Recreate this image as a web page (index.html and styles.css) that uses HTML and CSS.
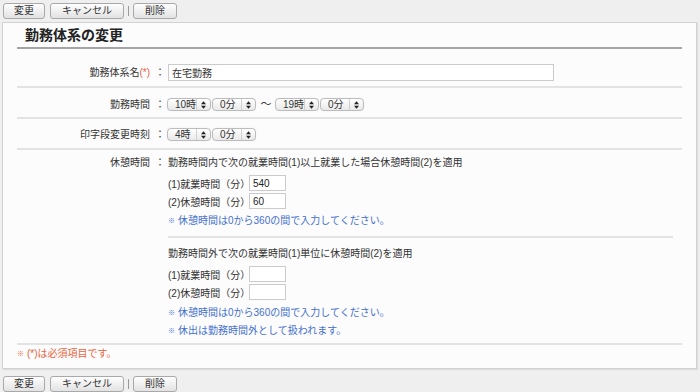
FILE: index.html
```html
<!DOCTYPE html>
<html lang="ja">
<head>
<meta charset="utf-8">
<title>勤務体系の変更</title>
<link rel="stylesheet" href="styles.css">
</head>
<body>
<div class="toolbar">
  <button class="btn btn-s first">変更</button>
  <button class="btn btn-l">キャンセル</button>
  <span class="bar"></span>
  <button class="btn btn-m">削除</button>
</div>

<div class="panel">
  <h1 class="title">勤務体系の変更</h1>

  <div class="row row-name">
    <div class="label">勤務体系名<span class="req">(*)</span></div>
    <div class="colon">：</div>
    <div class="value"><input class="text-input" type="text" value="在宅勤務"></div>
  </div>

  <div class="row row-time">
    <div class="label">勤務時間</div>
    <div class="colon">：</div>
    <div class="value selects">
      <span class="sel"><span class="sel-text">10時</span><span class="sel-arrow"><svg width="5" height="8" viewBox="0 0 5 8"><path d="M0 3.3L2.5 0.2 5 3.3z M0 4.7L2.5 7.8 5 4.7z" fill="#222"/></svg></span></span>
      <span class="sel"><span class="sel-text">0分</span><span class="sel-arrow"><svg width="5" height="8" viewBox="0 0 5 8"><path d="M0 3.3L2.5 0.2 5 3.3z M0 4.7L2.5 7.8 5 4.7z" fill="#222"/></svg></span></span>
      <span class="tilde">〜</span>
      <span class="sel"><span class="sel-text">19時</span><span class="sel-arrow"><svg width="5" height="8" viewBox="0 0 5 8"><path d="M0 3.3L2.5 0.2 5 3.3z M0 4.7L2.5 7.8 5 4.7z" fill="#222"/></svg></span></span>
      <span class="sel"><span class="sel-text">0分</span><span class="sel-arrow"><svg width="5" height="8" viewBox="0 0 5 8"><path d="M0 3.3L2.5 0.2 5 3.3z M0 4.7L2.5 7.8 5 4.7z" fill="#222"/></svg></span></span>
    </div>
  </div>

  <div class="row row-stamp">
    <div class="label">印字段変更時刻</div>
    <div class="colon">：</div>
    <div class="value selects">
      <span class="sel"><span class="sel-text">4時</span><span class="sel-arrow"><svg width="5" height="8" viewBox="0 0 5 8"><path d="M0 3.3L2.5 0.2 5 3.3z M0 4.7L2.5 7.8 5 4.7z" fill="#222"/></svg></span></span>
      <span class="sel"><span class="sel-text">0分</span><span class="sel-arrow"><svg width="5" height="8" viewBox="0 0 5 8"><path d="M0 3.3L2.5 0.2 5 3.3z M0 4.7L2.5 7.8 5 4.7z" fill="#222"/></svg></span></span>
    </div>
  </div>

  <div class="row row-break">
    <div class="label">休憩時間</div>
    <div class="colon">：</div>
    <div class="value">
      <div class="section">
        <div class="line">勤務時間内で次の就業時間(1)以上就業した場合休憩時間(2)を適用</div>
        <div class="field"><span class="flabel">(1)就業時間（分）</span><input class="num" type="text" value="540"></div>
        <div class="field"><span class="flabel">(2)休憩時間（分）</span><input class="num" type="text" value="60"></div>
        <div class="note"><span class="mark">※</span>休憩時間は0から360の間で入力してください。</div>
      </div>
      <div class="section second">
        <div class="line">勤務時間外で次の就業時間(1)単位に休憩時間(2)を適用</div>
        <div class="field"><span class="flabel">(1)就業時間（分）</span><input class="num" type="text" value=""></div>
        <div class="field"><span class="flabel">(2)休憩時間（分）</span><input class="num" type="text" value=""></div>
        <div class="note first-note"><span class="mark">※</span>休憩時間は0から360の間で入力してください。</div>
        <div class="note tight"><span class="mark">※</span>休出は勤務時間外として扱われます。</div>
      </div>
    </div>
  </div>

  <div class="footnote"><span class="mark">※</span>(*)は必須項目です。</div>
</div>

<div class="toolbar bottom">
  <button class="btn btn-s first">変更</button>
  <button class="btn btn-l">キャンセル</button>
  <span class="bar"></span>
  <button class="btn btn-m">削除</button>
</div>
</body>
</html>
```

FILE: styles.css
```css
html, body {
  margin: 0;
  padding: 0;
}
body {
  background: #efefef;
  color: #333;
  font-family: "Liberation Sans", "Noto Sans CJK JP", sans-serif;
  font-size: 10px;
  width: 700px;
  height: 392px;
  overflow: hidden;
}

/* toolbar */
.toolbar {
  display: flex;
  align-items: center;
  gap: 4px;
  padding: 3px 0 0 3px;
  height: 16px;
}
.toolbar.bottom {
  padding-top: 7px;
}
.btn {
  box-sizing: border-box;
  height: 16px;
  padding: 0;
  margin: 0;
  border: 1px solid #a9a9a9;
  border-radius: 3px;
  background: linear-gradient(#fefefe, #e2e2e2);
  font-family: "Liberation Sans", "Noto Sans CJK JP", sans-serif;
  font-size: 10px;
  line-height: 14px;
  color: #333;
  text-align: center;
}
.btn.first { margin-right: 1px; }
.btn-s { width: 42px; }
.btn-l { width: 74px; }
.btn-m { width: 44px; }
.bar {
  width: 1px;
  height: 10px;
  background: #9a9a9a;
}

/* panel */
.panel {
  margin: 3px 3px 0 2px;
  background: #fcfcfc;
  border: 1px solid #d2d2d2;
  box-shadow: 1px 1px 1px rgba(0, 0, 0, 0.08);
}
.title {
  margin: 0 14px;
  padding: 1px 0 0 8px;
  font-size: 14px;
  font-weight: bold;
  line-height: 23px;
  color: #222;
  border-bottom: 2px solid #a4a4a4;
}

.row {
  display: flex;
  align-items: center;
  margin: 0 14px;
  border-bottom: 2px solid #e3e3e3;
}
.row-name { padding: 15px 0 5px; }
.row-time { padding: 10px 0 6px; }
.row-stamp { padding: 9px 0 7px; }
.row-break {
  align-items: flex-start;
  padding: 4px 0 3px;
}

.label {
  width: 133px;
  text-align: right;
  line-height: 13px;
  color: #333;
}
.req { color: #e8643f; }
.colon {
  width: 12px;
  margin: 0 2px 0 4px;
  text-align: center;
  line-height: 13px;
}
.row-break .label,
.row-break .colon { line-height: 18px; }
.value { flex: 1; }

.text-input {
  box-sizing: border-box;
  display: block;
  width: 386px;
  height: 17px;
  margin: 0;
  padding: 0 3px;
  border: 1px solid #cbcbcb;
  background: #fff;
  font-family: "Liberation Sans", "Noto Sans CJK JP", sans-serif;
  font-size: 10px;
  color: #333;
  outline: none;
}

.selects {
  display: flex;
  align-items: center;
  gap: 1px;
  margin-left: -1px;
}
.sel {
  box-sizing: border-box;
  display: inline-flex;
  align-items: stretch;
  flex: 0 0 44px;
  width: 44px;
  height: 13px;
  border: 1px solid #bcbcbc;
  border-radius: 4px;
  background: linear-gradient(#ffffff, #e9e9e9);
  box-shadow: 0 0 1px rgba(0, 0, 0, 0.15);
}
.sel-text {
  flex: 1 1 auto;
  min-width: 0;
  padding-left: 7px;
  line-height: 11px;
  white-space: nowrap;
  overflow: hidden;
  color: #333;
}
.sel-arrow {
  flex: 0 0 13px;
  border-left: 1px solid #d0d0d0;
  display: flex;
  align-items: center;
  justify-content: center;
}
.tilde {
  width: 12px;
  margin: 0 2px 0 3px;
  text-align: center;
  font-size: 11px;
  line-height: 13px;
}

.line { line-height: 18px; }
.field {
  display: flex;
  align-items: center;
  height: 18px;
}
.section .line + .field { margin-top: 2px; }
.flabel {
  width: 81px;
  white-space: nowrap;
}
.num {
  box-sizing: border-box;
  width: 37px;
  height: 16px;
  margin: 0;
  padding: 0 3px;
  border: 1px solid #cbcbcb;
  background: #fff;
  font-family: "Liberation Sans", "Noto Sans CJK JP", sans-serif;
  font-size: 10px;
  color: #222;
  outline: none;
}
.note {
  line-height: 18px;
  color: #4470cf;
  margin-top: 2px;
}
.note.first-note { margin-top: 3px; }
.note.tight { margin-top: 0; }
.mark {
  font-size: 7px;
  margin-right: 3px;
  vertical-align: 1px;
}
.section.second {
  margin-top: 6px;
  margin-right: 9px;
  padding-top: 7px;
  border-top: 2px solid #e3e3e3;
}

.footnote {
  margin: 0 14px;
  padding: 0 0 5px;
  line-height: 18px;
  color: #e8643f;
}
```
